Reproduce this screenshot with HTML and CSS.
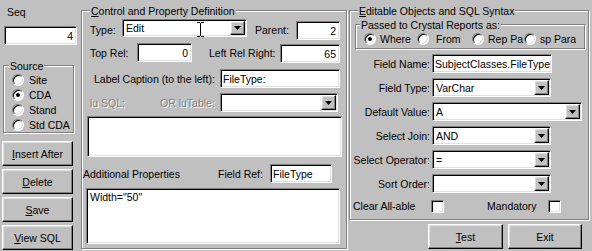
FILE: index.html
```html
<!DOCTYPE html>
<html>
<head>
<meta charset="utf-8">
<title>Control Definition</title>
<link rel="stylesheet" href="styles.css">
</head>
<body>
<div class="left-col">
  <div class="seq-label">Seq</div>
  <div class="field sunken num seq-box">4</div>
  <div class="group source">
    <div class="group-title">Source</div>
    <div class="radio-row"><span class="radio"></span><span>Site</span></div>
    <div class="radio-row"><span class="radio checked"></span><span>CDA</span></div>
    <div class="radio-row"><span class="radio"></span><span>Stand</span></div>
    <div class="radio-row"><span class="radio"></span><span>Std CDA</span></div>
  </div>
  <div class="btn-stack">
    <div class="btn raised"><span><u>I</u>nsert After</span></div>
    <div class="btn raised"><span><u>D</u>elete</span></div>
    <div class="btn raised"><span><u>S</u>ave</span></div>
    <div class="btn raised"><span><u>V</u>iew SQL</span></div>
  </div>
</div>

<div class="group mid">
  <div class="group-title"><u>C</u>ontrol and Property Definition</div>
  <div class="row r1">
    <span class="lbl l-type">Type:</span>
    <div class="combo sunken c-type">
      <span class="val">Edit</span>
      <span class="drop raised"><svg width="7" height="4" viewBox="0 0 7 4"><polygon points="0,0 7,0 3.5,4" fill="#000"/></svg></span>
      <svg class="ibeam" width="7" height="15" viewBox="0 0 7 15"><path d="M0 0.5h3M4 0.5h3M3.5 1v13M0 14.5h3M4 14.5h3" stroke="#000" stroke-width="1" fill="none"/></svg>
    </div>
    <span class="lbl l-parent">Parent:</span>
    <div class="field sunken num f-parent">2</div>
  </div>
  <div class="row r2">
    <span class="lbl l-top">Top Rel:</span>
    <div class="field sunken num f-top">0</div>
    <span class="lbl l-left">Left Rel Right:</span>
    <div class="field sunken num f-left">65</div>
  </div>
  <div class="row r3">
    <span class="lbl l-caption">Label Caption (to the left):</span>
    <div class="field sunken f-caption">FileType:</div>
  </div>
  <div class="row r4">
    <span class="lbl dis l-lusql">lu SQL:</span>
    <span class="lbl dis l-lutable">OR luTable:</span>
    <div class="combo sunken c-lutable">
      <span class="val"></span>
      <span class="drop raised"><svg width="7" height="4" viewBox="0 0 7 4"><polygon points="0,0 7,0 3.5,4" fill="#000"/></svg></span>
    </div>
  </div>
  <div class="sunken area ta1"></div>
  <div class="row r5">
    <span class="lbl l-addl">Additional Properties</span>
    <span class="lbl l-fref">Field Ref:</span>
    <div class="field sunken f-fref">FileType</div>
  </div>
  <div class="sunken area ta2">Width="50"</div>
</div>

<div class="right-col">
  <div class="group right">
    <div class="group-title"><u>E</u>ditable Objects and SQL Syntax</div>
    <div class="group passed">
      <div class="group-title">Passed to Crystal Reports as:</div>
      <div class="radio-line">
        <div class="ritem ri-where"><span class="radio checked"></span><span>Where</span></div>
        <div class="ritem ri-from"><span class="radio"></span><span>From</span></div>
        <div class="ritem ri-rep"><span class="radio"></span><span>Rep Pa</span></div>
        <div class="ritem ri-sp"><span class="radio"></span><span>sp Para</span></div>
      </div>
    </div>
    <div class="frow">
      <span class="flbl">Field Name:</span>
      <div class="field sunken w120">SubjectClasses.FileType</div>
    </div>
    <div class="frow">
      <span class="flbl">Field Type:</span>
      <div class="combo sunken w119">
        <span class="val">VarChar</span>
        <span class="drop raised"><svg width="7" height="4" viewBox="0 0 7 4"><polygon points="0,0 7,0 3.5,4" fill="#000"/></svg></span>
      </div>
    </div>
    <div class="frow">
      <span class="flbl">Default Value:</span>
      <div class="combo sunken w150">
        <span class="val">A</span>
        <span class="drop raised"><svg width="7" height="4" viewBox="0 0 7 4"><polygon points="0,0 7,0 3.5,4" fill="#000"/></svg></span>
      </div>
    </div>
    <div class="frow">
      <span class="flbl">Select Join:</span>
      <div class="combo sunken w119">
        <span class="val">AND</span>
        <span class="drop raised"><svg width="7" height="4" viewBox="0 0 7 4"><polygon points="0,0 7,0 3.5,4" fill="#000"/></svg></span>
      </div>
    </div>
    <div class="frow">
      <span class="flbl">Select Operator:</span>
      <div class="combo sunken w119">
        <span class="val">=</span>
        <span class="drop raised"><svg width="7" height="4" viewBox="0 0 7 4"><polygon points="0,0 7,0 3.5,4" fill="#000"/></svg></span>
      </div>
    </div>
    <div class="frow">
      <span class="flbl">Sort Order:</span>
      <div class="combo sunken w119">
        <span class="val"></span>
        <span class="drop raised"><svg width="7" height="4" viewBox="0 0 7 4"><polygon points="0,0 7,0 3.5,4" fill="#000"/></svg></span>
      </div>
    </div>
    <div class="crow">
      <span class="lbl l-clear">Clear All-able</span>
      <span class="check sunken"></span>
      <span class="lbl l-mand">Mandatory</span>
      <span class="check sunken"></span>
    </div>
  </div>
  <div class="bottom-btns">
    <div class="btn raised b-test"><span><u>T</u>est</span></div>
    <div class="btn raised b-exit"><span>Exit</span></div>
  </div>
</div>
</body>
</html>
```

FILE: styles.css
```css
* { box-sizing: border-box; }
html, body { margin: 0; padding: 0; }
body {
  width: 592px;
  height: 251px;
  overflow: hidden;
  background: #c0c0c0;
  font-family: "Liberation Sans", Arial, sans-serif;
  font-size: 10.5px;
  color: #000;
  display: flex;
  align-items: flex-start;
}
u { text-decoration: underline; text-underline-offset: 1px; }

/* 3D primitives */
.sunken {
  border: 1px solid;
  border-color: #808080 #fff #fff #808080;
  box-shadow: inset 1px 1px 0 #000, inset -1px -1px 0 #dfdfdf;
  background: #fff;
}
.raised {
  border: 1px solid;
  border-color: #fff #000 #000 #fff;
  box-shadow: inset -1px -1px 0 #808080, inset 1px 1px 0 #dfdfdf;
  background: #c0c0c0;
}
.group {
  border: 1px solid #808080;
  box-shadow: inset 1px 1px 0 #fff, 1px 1px 0 #fff;
  flex: none;
}
.group-title {
  width: fit-content;
  height: 12px;
  line-height: 12px;
  margin-top: -6px;
  padding: 0 1px;
  background: #c0c0c0;
  white-space: nowrap;
}

/* controls */
.field {
  flex: none;
  height: 19px;
  padding: 0 3px 0 2px;
  display: flex;
  align-items: center;
  white-space: nowrap;
  overflow: hidden;
}
.num { justify-content: flex-end; }
.combo {
  flex: none;
  display: flex;
  height: 19px;
  padding: 1px;
  position: relative;
}
.combo .val {
  flex: 1;
  padding-left: 2px;
  display: flex;
  align-items: center;
  white-space: nowrap;
  overflow: hidden;
}
.combo .drop {
  flex: none;
  width: 15px;
  height: 100%;
  display: flex;
  align-items: center;
  justify-content: center;
}
.combo .drop svg { display: block; }
.ibeam { position: absolute; left: 74px; top: 2px; }
.area {
  flex: none;
  padding: 2px 3px;
  line-height: 13px;
}
.radio {
  flex: none;
  width: 12px;
  height: 12px;
  border-radius: 50%;
  border: 1px solid;
  border-color: #808080 #fff #fff #808080;
  box-shadow: inset 1px 1px 0 #000, inset -1px -1px 0 #dfdfdf;
  background: #fff;
  display: flex;
  align-items: center;
  justify-content: center;
}
.radio.checked::after {
  content: "";
  width: 4px;
  height: 4px;
  border-radius: 50%;
  background: #000;
}
.check {
  flex: none;
  width: 13px;
  height: 13px;
}
.btn {
  display: flex;
  align-items: center;
  justify-content: center;
  height: 25px;
  white-space: nowrap;
}
.lbl { flex: none; white-space: nowrap; line-height: 12px; }
.dis { color: #808080; text-shadow: 1px 1px 0 #fff; }

/* left column */
.left-col {
  width: 81px;
  flex: none;
  display: flex;
  flex-direction: column;
  align-items: flex-start;
}
.seq-label { margin: 6px 0 0 7px; height: 12px; line-height: 12px; }
.seq-box { margin: 8px 0 0 4px; width: 73px; }
.source { margin: 20px 0 0 3px; width: 71px; }
.source .group-title { margin-left: 5px; }
.radio-row {
  display: flex;
  align-items: center;
  gap: 5px;
  height: 15px;
  padding-left: 8px;
  white-space: nowrap;
}
.btn-stack {
  display: flex;
  flex-direction: column;
  gap: 3px;
  margin: 8px 0 0 2px;
}
.btn-stack .btn { width: 71px; }

/* middle frame */
.mid { width: 266px; height: 239px; margin-top: 10px; }
.mid > .group-title { margin-left: 8px; }
.row { display: flex; align-items: center; }
.r1 { height: 21px; margin-top: 2px; }
.l-type { margin-left: 8px; width: 32px; }
.c-type { width: 125px; height: 18px; align-self: flex-start; }
.l-parent { margin-left: 8px; width: 41px; }
.f-parent { width: 44px; align-self: flex-end; }
.r2 { height: 20px; margin-top: 3px; }
.l-top { margin-left: 8px; width: 47px; }
.f-top { width: 55px; align-self: flex-start; }
.l-left { margin-left: 17px; width: 71px; }
.f-left { width: 60px; align-self: flex-end; }
.r3 { height: 19px; margin-top: 6px; }
.l-caption { margin-left: 12px; width: 126px; }
.f-caption { width: 120px; }
.r4 { height: 19px; margin-top: 5px; }
.l-lusql { margin-left: 8px; width: 70px; }
.l-lutable { width: 60px; }
.c-lutable { width: 118px; }
.ta1 { margin: 4px 0 0 5px; width: 255px; height: 41px; }
.r5 { height: 19px; margin-top: 7px; }
.l-addl { margin-left: 1px; width: 135px; }
.l-fref { width: 52px; }
.f-fref { width: 62px; }
.ta2 { margin: 5px 0 0 4px; width: 254px; height: 56px; }

/* right column */
.right-col {
  width: 245px;
  flex: none;
  display: flex;
  flex-direction: column;
  align-items: flex-start;
}
.right { margin: 10px 0 0 2px; width: 240px; height: 210px; }
.right > .group-title { margin-left: 8px; }
.passed { margin: 7px 0 0 5px; width: 230px; padding-bottom: 1px; }
.passed .group-title { margin-left: 4px; }
.radio-line {
  display: flex;
  align-items: center;
  height: 16px;
  padding-left: 8px;
}
.ritem {
  flex: none;
  display: flex;
  align-items: center;
  gap: 4px;
  white-space: nowrap;
  overflow: hidden;
}
.ri-where { width: 53px; }
.ri-from { width: 55px; gap: 7px; }
.ri-rep { width: 52px; }
.frow {
  display: flex;
  align-items: center;
  height: 19px;
  margin-top: 5px;
}
.flbl {
  flex: none;
  width: 82px;
  padding-right: 2px;
  text-align: right;
  white-space: nowrap;
}
.w120 { width: 120px; }
.w119 { width: 119px; }
.w150 { width: 150px; }
.crow {
  display: flex;
  align-items: center;
  height: 14px;
  margin-top: 6px;
}
.l-clear { margin-left: 3px; width: 78px; }
.l-mand { margin-left: 43px; width: 61px; }
.bottom-btns {
  display: flex;
  gap: 5px;
  margin: 4px 0 0 81px;
}
.b-test { width: 75px; }
.b-exit { width: 74px; }
```
